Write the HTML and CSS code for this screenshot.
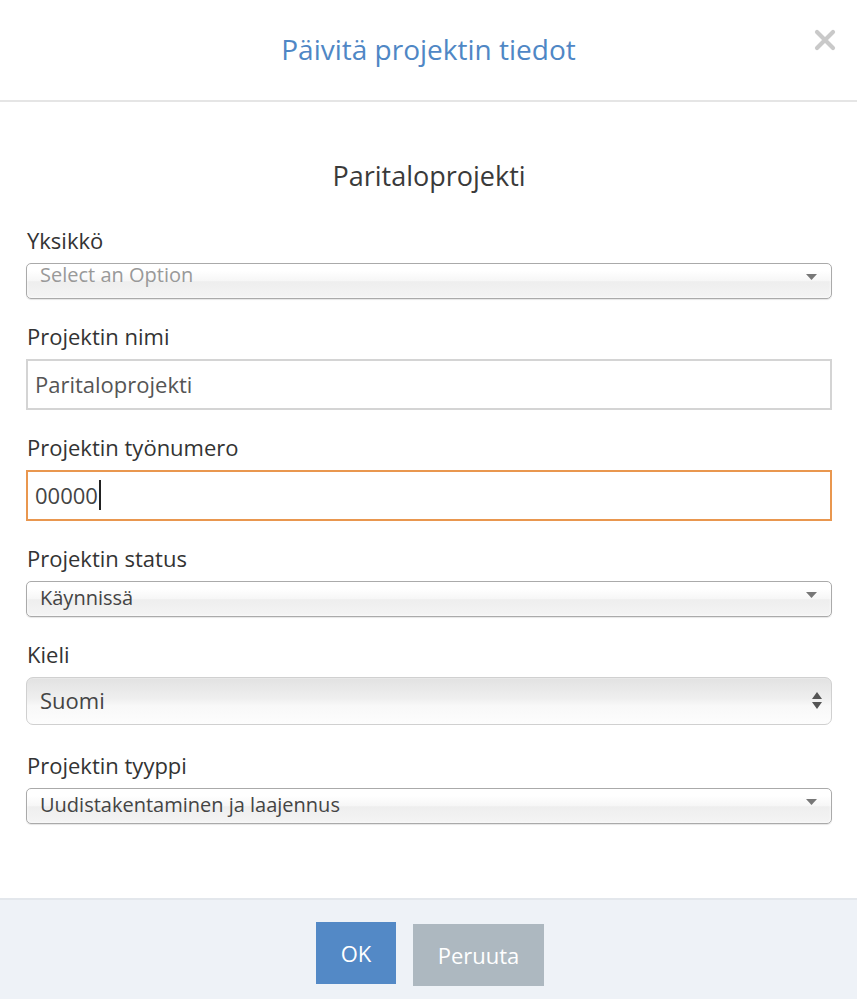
FILE: index.html
```html
<!DOCTYPE html>
<html lang="fi">
<head>
    <meta charset="UTF-8">
    <meta name="viewport" content="width=device-width, initial-scale=1.0">
    <title>Päivitä projektin tiedot</title>
    <link rel="stylesheet" href="styles.css">
</head>
<body>

<div class="modal">
    <!-- otsikko ja sulkunappi -->
    <div class="modal-header">
        <h1 class="modal-title">Päivitä projektin tiedot</h1>
        <a class="modal-close" href="#" title="Sulje">
            <svg width="22" height="22" viewBox="0 0 22 22">
                <path d="M3 3 L19 19 M19 3 L3 19" stroke="#c9c9c9" stroke-width="4.2" stroke-linecap="round"/>
            </svg>
        </a>
    </div>

    <!-- lomake -->
    <div class="modal-body">
        <h2 class="project-name">Paritaloprojekti</h2>

        <div class="form-group">
            <label>Yksikkö</label>
            <div class="chosen">
                <span class="chosen-text placeholder">Select an Option</span>
                <svg class="chosen-arrow" width="11" height="6" viewBox="0 0 11 6"><path d="M0 0 H11 L5.5 6 Z" fill="#777"/></svg>
            </div>
        </div>

        <div class="form-group">
            <label for="name">Projektin nimi</label>
            <input class="text-field" type="text" id="name" value="Paritaloprojekti">
        </div>

        <div class="form-group">
            <label>Projektin työnumero</label>
            <div class="text-field focused">00000<span class="caret"></span></div>
        </div>

        <div class="form-group">
            <label>Projektin status</label>
            <div class="chosen">
                <span class="chosen-text">Käynnissä</span>
                <svg class="chosen-arrow" width="11" height="6" viewBox="0 0 11 6"><path d="M0 0 H11 L5.5 6 Z" fill="#777"/></svg>
            </div>
        </div>

        <div class="form-group">
            <label for="lang">Kieli</label>
            <div class="native-select">
                <select id="lang">
                    <option>Suomi</option>
                    <option>Svenska</option>
                    <option>English</option>
                </select>
                <svg class="updown" width="10" height="17" viewBox="0 0 10 17">
                    <path d="M5 0 L10 7 H0 Z M0 10 H10 L5 17 Z" fill="#555"/>
                </svg>
            </div>
        </div>

        <div class="form-group">
            <label>Projektin tyyppi</label>
            <div class="chosen">
                <span class="chosen-text">Uudistakentaminen ja laajennus</span>
                <svg class="chosen-arrow" width="11" height="6" viewBox="0 0 11 6"><path d="M0 0 H11 L5.5 6 Z" fill="#777"/></svg>
            </div>
        </div>
    </div>

    <!-- napit -->
    <div class="modal-footer">
        <button class="btn btn-ok">OK</button>
        <button class="btn btn-cancel">Peruuta</button>
    </div>
</div>

</body>
</html>
```

FILE: styles.css
```css
body {
    margin: 0;
    font-family: "Open Sans", "Noto Sans", sans-serif;
    color: #333;
    background: #fff;
}
.modal {
    width: 857px;
    height: 999px;
    display: flex;
    flex-direction: column;
}
.modal-header {
    position: relative;
    height: 100px;
    border-bottom: 2px solid #e5e5e5;
    display: flex;
    align-items: center;
    justify-content: center;
}
.modal-title {
    margin: 0 0 3px;
    font-size: 28px;
    font-weight: 400;
    color: #4f87c5;
}
.modal-close {
    position: absolute;
    right: 21px;
    top: 29px;
    line-height: 0;
}
.modal-body {
    flex: 1;
    padding: 0 25px 0 26px;
}
.project-name {
    margin: 56px 0 31px;
    text-align: center;
    font-size: 27px;
    font-weight: 400;
    line-height: 36px;
    color: #3a3a3a;
}
.form-group {
    margin-bottom: 22px;
}
.form-group label {
    display: block;
    font-size: 22px;
    line-height: 30px;
    margin: 0 0 8px 1px;
    color: #333;
}
.chosen {
    position: relative;
    height: 36px;
    box-sizing: border-box;
    border: 1px solid #aaa;
    border-radius: 5px;
    background: linear-gradient(#fff 20%, #f6f6f6 50%, #eee 52%, #f4f4f4 100%);
    box-shadow: 0 0 3px #fff inset, 0 1px 1px rgba(0, 0, 0, 0.1);
    display: flex;
    align-items: center;
    padding: 0 0 4px 13px;
}
.chosen-text {
    font-size: 20px;
    color: #444;
    flex: 1;
}
.chosen-text.placeholder {
    color: #999;
    margin-bottom: 10px;
}
.chosen-arrow {
    margin: 0 14px 5px 0;
}
.text-field {
    display: flex;
    align-items: center;
    width: 100%;
    height: 51px;
    box-sizing: border-box;
    margin: 0;
    padding: 0 7px 2px;
    border: 2px solid #d4d4d4;
    font-family: inherit;
    font-size: 22px;
    color: #555;
    background: #fff;
    outline: none;
}
.text-field.focused {
    border-color: #e9974f;
    color: #444;
}
.caret {
    display: inline-block;
    width: 2px;
    height: 30px;
    margin-left: 1px;
    background: #222;
}
.native-select {
    position: relative;
    padding-bottom: 3px;
}
.native-select select {
    display: block;
    width: 100%;
    height: 48px;
    margin: 0;
    padding: 0 0 2px 13px;
    appearance: none;
    -webkit-appearance: none;
    border: 1px solid #d0d0d0;
    border-radius: 7px;
    font-family: inherit;
    font-size: 22px;
    color: #444;
    background: linear-gradient(#e2e2e2, #efefef 45%, #f8f8f8 60%, #fdfdfd);
    box-shadow: 0 1px 0 #e8e8e8 inset;
}
.updown {
    position: absolute;
    right: 10px;
    top: 15px;
    pointer-events: none;
}
.modal-footer {
    height: 101px;
    box-sizing: border-box;
    border-top: 2px solid #e3e7ec;
    background: #eef2f7;
    display: flex;
    justify-content: center;
    align-items: flex-start;
    gap: 17px;
    padding: 22px 0 0 3px;
}
.btn {
    border: none;
    color: #fff;
    font-family: inherit;
    font-size: 22px;
    cursor: pointer;
}
.btn-ok {
    width: 80px;
    height: 62px;
    background: #5389c6;
}
.btn-cancel {
    width: 131px;
    height: 62px;
    margin-top: 2px;
    background: #adb8c0;
}
```
